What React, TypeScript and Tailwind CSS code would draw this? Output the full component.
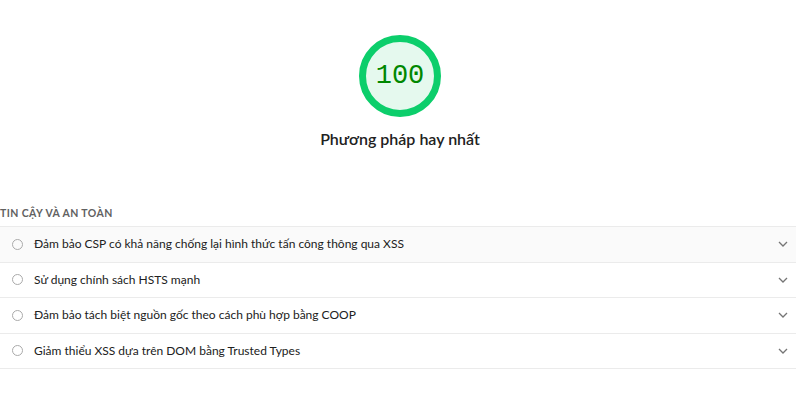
import React from "react";

const audits = [
  "Đảm bảo CSP có khả năng chống lại hình thức tấn công thông qua XSS",
  "Sử dụng chính sách HSTS mạnh",
  "Đảm bảo tách biệt nguồn gốc theo cách phù hợp bằng COOP",
  "Giảm thiểu XSS dựa trên DOM bằng Trusted Types",
];

function Gauge() {
  return (
    <div className="relative h-[82px] w-[82px]">
      <svg viewBox="0 0 82 82" className="absolute inset-0 h-full w-full">
        <circle cx="41" cy="41" r="37.5" fill="#e5f9ee" stroke="#0cce6b" strokeWidth="7" />
      </svg>
      <div className="absolute inset-0 flex items-center justify-center font-['Liberation_Mono',monospace] text-[27px] text-[#008800]">
        100
      </div>
    </div>
  );
}

function Chevron() {
  return (
    <svg viewBox="0 0 10 6" className="h-[6px] w-[10px]">
      <path d="M1 1l4 4 4-4" fill="none" stroke="#757575" strokeWidth="1.3" />
    </svg>
  );
}

export default function App() {
  return (
    <div className="min-h-[397px] w-[800px] bg-white font-['Lato',sans-serif] text-[#212121]">
      <div className="flex flex-col items-center pt-[35px]">
        <Gauge />
        <div className="mt-[10px] text-[16px] font-semibold leading-[24px]">Phương pháp hay nhất</div>
      </div>
      <div className="mt-[54px] pr-[4px]">
        <div className="pb-[5px] text-[10.5px] font-bold uppercase leading-[16px] tracking-[0.04em] text-[#616161]">
          Tin cậy và an toàn
        </div>
        <div className="border-t border-[#ebebeb]">
          {audits.map((a, i) => (
            <div
              key={a}
              className={`flex h-[35.5px] items-center border-b border-[#ebebeb] pl-[12px] pr-[8px] ${
                i === 0 ? "bg-[#fafafa]" : "bg-white"
              }`}
            >
              <span className="h-[11px] w-[11px] rounded-full border-[1.5px] border-[#aaaaaa]" />
              <span className="ml-[11px] flex-1 text-[12px] leading-[18px]">{a}</span>
              <Chevron />
            </div>
          ))}
        </div>
      </div>
    </div>
  );
}
